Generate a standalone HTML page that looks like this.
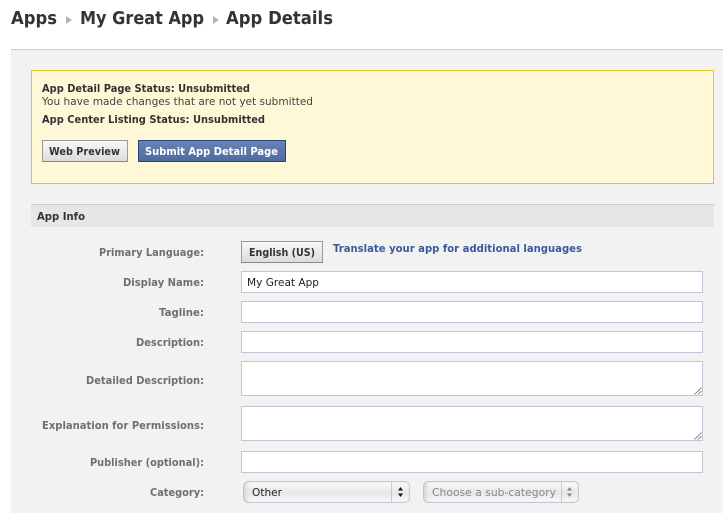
<!DOCTYPE html>
<html><head><meta charset="utf-8"><title>App Details</title>
<style>
html,body{margin:0;padding:0;background:#fff;width:723px;height:513px;overflow:hidden}
.a{position:absolute;box-sizing:border-box}
svg.t{position:absolute;left:0;top:0;z-index:5}
svg.t text{font-family:"DejaVu Sans","Liberation Sans",sans-serif;font-size:11px}
.b{font-weight:bold}
.l{font-weight:bold;fill:#6f6f6f}
.i{background:#fff;border:1px solid #bdc7d8}
.btn{background:linear-gradient(#f8f8f8,#dcdcdc);border:1px solid #999;border-bottom-color:#888}
.sel{border:1px solid #bdc7d8;border-radius:5px;background:linear-gradient(#fbfbfb 0,#ededed 35%,#e8e8e8 60%,#fbfbfb 100%);box-shadow:inset 3px 0 3px -1px #d4d4d4}
</style></head><body>
<div class="a" style="left:11px;top:49px;width:712px;height:464px;background:#f2f2f2;border-top:1px solid #ccc"></div>
<div class="a" style="left:31px;top:70px;width:683px;height:114px;background:#fff8d7;border:1px solid #e2c822"></div>
<div class="a btn" style="left:42px;top:140px;width:86px;height:22px"></div>
<div class="a" style="left:138px;top:140px;width:148px;height:22px;background:linear-gradient(#6a83b4,#4f6aa3);border:1px solid #29447e"></div>
<div class="a" style="left:31px;top:204px;width:683px;height:23px;background:#e6e6e6;border-top:1px solid #ccc"></div>
<div class="a btn" style="left:241px;top:241px;width:82px;height:22px"></div>
<div class="a i" style="left:241px;top:271px;width:462px;height:22px"></div>
<div class="a i" style="left:241px;top:301px;width:462px;height:22px"></div>
<div class="a i" style="left:241px;top:331px;width:462px;height:22px"></div>
<div class="a i" style="left:241px;top:361px;width:462px;height:35px"></div>
<div class="a i" style="left:241px;top:406px;width:462px;height:35px"></div>
<div class="a i" style="left:241px;top:451px;width:462px;height:22px"></div>
<div class="a sel" style="left:243px;top:481px;width:167px;height:22px"></div>
<div class="a" style="left:391px;top:482px;width:1px;height:20px;background:#c9c9c9"></div>
<div class="a sel" style="left:423px;top:481px;width:156px;height:22px"></div>
<div class="a" style="left:561px;top:482px;width:1px;height:20px;background:#c9c9c9"></div>
<svg class="t" width="723" height="513" viewBox="0 0 723 513" xmlns="http://www.w3.org/2000/svg">
<g fill="#333" class="b" font-size="18" style="font-weight:bold">
<text x="11" y="24" textLength="46" lengthAdjust="spacingAndGlyphs" style="font-size:18px">Apps</text>
<text x="80" y="24" textLength="124" lengthAdjust="spacingAndGlyphs" style="font-size:18px">My Great App</text>
<text x="226" y="24" textLength="107" lengthAdjust="spacingAndGlyphs" style="font-size:18px">App Details</text>
</g>
<path d="M66 16l6 4-6 4z M213 16l6 4-6 4z" fill="#b4b4b4"/>
<text class="b" fill="#333" x="42" y="92" textLength="208" lengthAdjust="spacingAndGlyphs">App Detail Page Status: Unsubmitted</text>
<text fill="#444" x="42" y="105" textLength="271" lengthAdjust="spacingAndGlyphs">You have made changes that are not yet submitted</text>
<text class="b" fill="#333" x="42" y="123" textLength="223" lengthAdjust="spacingAndGlyphs">App Center Listing Status: Unsubmitted</text>
<text class="b" fill="#333" x="49" y="155" textLength="71" lengthAdjust="spacingAndGlyphs">Web Preview</text>
<text class="b" fill="#fff" x="145" y="155" textLength="133" lengthAdjust="spacingAndGlyphs">Submit App Detail Page</text>
<text class="b" fill="#333" x="37" y="220" textLength="48" lengthAdjust="spacingAndGlyphs">App Info</text>
<text class="l" x="99" y="256" textLength="105" lengthAdjust="spacingAndGlyphs">Primary Language:</text>
<text class="l" x="123" y="286" textLength="81" lengthAdjust="spacingAndGlyphs">Display Name:</text>
<text class="l" x="159" y="316" textLength="45" lengthAdjust="spacingAndGlyphs">Tagline:</text>
<text class="l" x="136" y="346" textLength="68" lengthAdjust="spacingAndGlyphs">Description:</text>
<text class="l" x="86" y="384" textLength="118" lengthAdjust="spacingAndGlyphs">Detailed Description:</text>
<text class="l" x="42" y="429" textLength="162" lengthAdjust="spacingAndGlyphs">Explanation for Permissions:</text>
<text class="l" x="90" y="466" textLength="114" lengthAdjust="spacingAndGlyphs">Publisher (optional):</text>
<text class="l" x="150" y="496" textLength="54" lengthAdjust="spacingAndGlyphs">Category:</text>
<text class="b" fill="#333" x="249" y="256" textLength="66" lengthAdjust="spacingAndGlyphs">English (US)</text>
<text class="b" fill="#3b5998" x="333" y="252" textLength="249" lengthAdjust="spacingAndGlyphs">Translate your app for additional languages</text>
<text fill="#222" x="247" y="286" textLength="72" lengthAdjust="spacingAndGlyphs">My Great App</text>
<text fill="#222" x="252" y="496" textLength="30" lengthAdjust="spacingAndGlyphs">Other</text>
<text fill="#888" x="432" y="496" textLength="124" lengthAdjust="spacingAndGlyphs">Choose a sub-category</text>
<path d="M398 490.5l2.5-3.5 2.5 3.5z M398 493.5l2.5 3.5 2.5-3.5z" fill="#111"/>
<path d="M567 490.5l2.5-3.5 2.5 3.5z M567 493.5l2.5 3.5 2.5-3.5z" fill="#888"/>
<path d="M694.5 394.5l7-7 M698 394.5l3.5-3.5 M694.5 439.5l7-7 M698 439.5l3.5-3.5" stroke="#666" stroke-width="0.8" fill="none"/>
</svg>
</body></html>
